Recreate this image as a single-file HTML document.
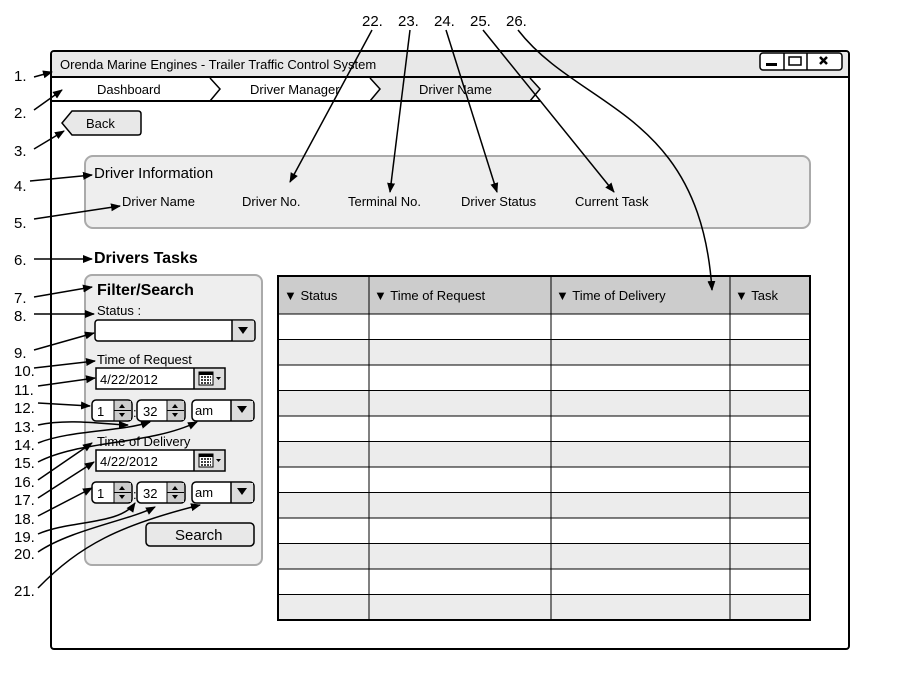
<!DOCTYPE html>
<html><head><meta charset="utf-8"><style>
html,body{margin:0;padding:0;background:#fff;width:900px;height:700px;overflow:hidden}
svg{display:block;font-family:"Liberation Sans",Arial,sans-serif}
</style></head><body>
<svg width="900" height="700" viewBox="0 0 900 700">
<defs>
<marker id="a" markerWidth="10" markerHeight="10" refX="9" refY="5" orient="auto" markerUnits="userSpaceOnUse">
<path d="M0,1 L10,5 L0,9 Z" fill="#000"/></marker>
</defs>
<!-- window -->
<rect x="51" y="51" width="798" height="598" rx="3" fill="#fff" stroke="#000" stroke-width="2"/>
<path d="M52,77 V54 Q52,52 54,52 H846 Q848,52 848,54 V77 Z" fill="#e8e8e8"/>
<line x1="51" y1="77" x2="849" y2="77" stroke="#000" stroke-width="2"/>
<text x="60" y="69" font-size="13">Orenda Marine Engines - Trailer Traffic Control System</text>
<rect x="760" y="53" width="82" height="17" rx="3" fill="#fff" stroke="#000" stroke-width="1.5"/>
<line x1="784" y1="53" x2="784" y2="70" stroke="#000" stroke-width="1.5"/>
<line x1="807" y1="53" x2="807" y2="70" stroke="#000" stroke-width="1.5"/>
<rect x="766" y="63" width="11" height="3" fill="#000"/>
<rect x="789" y="57" width="12" height="8" fill="none" stroke="#000" stroke-width="1.5"/>
<path d="M820,57 L827,64 M827,57 L820,64" stroke="#000" stroke-width="2.5"/>
<!-- breadcrumb -->
<path d="M370,78 H530 L540,89 L530,101 H370 L380,89 Z" fill="#e8e8e8"/>
<path d="M210,78 L220,89 L210,101 M370,78 L380,89 L370,101 M530,78 L540,89 L530,101" fill="none" stroke="#000" stroke-width="1.5"/>
<line x1="51" y1="101" x2="540" y2="101" stroke="#000" stroke-width="2"/>
<text x="97" y="94" font-size="13">Dashboard</text>
<text x="250" y="94" font-size="13">Driver Manager</text>
<text x="419" y="94" font-size="13">Driver Name</text>
<!-- back -->
<path d="M72,111 H138 Q141,111 141,114 V132 Q141,135 138,135 H72 L62,123 Z" fill="#e8e8e8" stroke="#000" stroke-width="1.5"/>
<text x="86" y="128" font-size="13">Back</text>
<!-- driver info -->
<rect x="85" y="156" width="725" height="72" rx="8" fill="#eee" stroke="#aaa" stroke-width="2"/>
<text x="94" y="178" font-size="15">Driver Information</text>
<g font-size="13"><text x="122" y="206">Driver Name</text><text x="242" y="206">Driver No.</text><text x="348" y="206">Terminal No.</text><text x="461" y="206">Driver Status</text><text x="575" y="206">Current Task</text></g>
<text x="94" y="263" font-size="16" font-weight="bold">Drivers Tasks</text>
<!-- filter -->
<rect x="85" y="275" width="177" height="290" rx="7" fill="#eee" stroke="#aaa" stroke-width="2"/>
<text x="97" y="295" font-size="16" font-weight="bold">Filter/Search</text>
<text x="97" y="315" font-size="13">Status :</text>
<rect x="95" y="320" width="160" height="21" rx="3" fill="#fff" stroke="#000" stroke-width="1.5"/>
<rect x="232" y="320.75" width="22" height="19.5" fill="#ddd"/><line x1="232" y1="320" x2="232" y2="341" stroke="#000" stroke-width="1.5"/>
<path d="M238,327 H248 L243,334 Z" fill="#000"/>
<text x="97" y="364" font-size="13">Time of Request</text>
<g id="dt">
<rect x="96" y="368" width="129" height="21" fill="#fff" stroke="#000" stroke-width="1.5"/>
<rect x="194" y="369" width="30" height="19" fill="#ddd"/><line x1="194" y1="368" x2="194" y2="389" stroke="#000" stroke-width="1.5"/>
<rect x="199" y="372" width="14" height="13" fill="#fff" stroke="#000"/><rect x="199" y="372" width="14" height="3" fill="#000"/>
<path d="M201,377h10M201,380h10M201,383h10" stroke="#000" stroke-width="1.5" stroke-dasharray="2,1"/>
<path d="M216,377 h5 l-2.5,3 z" fill="#000"/>
<text x="100" y="384" font-size="13">4/22/2012</text>
</g>
<g id="tm">
<rect x="92" y="400" width="40" height="21" rx="4" fill="#fff" stroke="#000" stroke-width="1.5"/>
<rect x="114" y="401" width="17" height="19" fill="#ccc"/><line x1="114" y1="400" x2="114" y2="421" stroke="#000"/><line x1="114" y1="410.5" x2="131" y2="410.5" stroke="#000"/>
<path d="M119,408 h6 l-3,-4 z M119,413 h6 l-3,4 z" fill="#000"/>
<text x="97" y="416" font-size="13">1</text>
<text x="133" y="417" font-size="13">:</text>
<rect x="137" y="400" width="48" height="21" rx="4" fill="#fff" stroke="#000" stroke-width="1.5"/>
<rect x="167" y="401" width="17" height="19" fill="#ccc"/><line x1="167" y1="400" x2="167" y2="421" stroke="#000"/><line x1="167" y1="410.5" x2="184" y2="410.5" stroke="#000"/>
<path d="M172,408 h6 l-3,-4 z M172,413 h6 l-3,4 z" fill="#000"/>
<text x="143" y="416" font-size="13">32</text>
<rect x="192" y="400" width="62" height="21" rx="4" fill="#fff" stroke="#000" stroke-width="1.5"/>
<rect x="231" y="401" width="22" height="19" fill="#ddd"/><line x1="231" y1="400" x2="231" y2="421" stroke="#000" stroke-width="1.5"/>
<path d="M237,406 H247 L242,413 Z" fill="#000"/>
<text x="195" y="415" font-size="13">am</text>
</g>
<text x="97" y="446" font-size="13">Time of Delivery</text>
<use href="#dt" y="82"/>
<use href="#tm" y="82"/>
<rect x="146" y="523" width="108" height="23" rx="4" fill="#e8e8e8" stroke="#000" stroke-width="1.5"/>
<text x="175" y="540" font-size="15">Search</text>
<!-- table -->
<rect x="278" y="276" width="532" height="38" fill="#ccc"/>
<g fill="#ececec">
<rect x="278" y="339.5" width="532" height="25.5"/><rect x="278" y="390.5" width="532" height="25.5"/><rect x="278" y="441.5" width="532" height="25.5"/><rect x="278" y="492.5" width="532" height="25.5"/><rect x="278" y="543.5" width="532" height="25.5"/><rect x="278" y="594.5" width="532" height="25.5"/>
</g>
<g stroke="#000" stroke-width="1">
<line x1="278" y1="314" x2="810" y2="314"/><line x1="278" y1="339.5" x2="810" y2="339.5"/><line x1="278" y1="365" x2="810" y2="365"/><line x1="278" y1="390.5" x2="810" y2="390.5"/><line x1="278" y1="416" x2="810" y2="416"/><line x1="278" y1="441.5" x2="810" y2="441.5"/><line x1="278" y1="467" x2="810" y2="467"/><line x1="278" y1="492.5" x2="810" y2="492.5"/><line x1="278" y1="518" x2="810" y2="518"/><line x1="278" y1="543.5" x2="810" y2="543.5"/><line x1="278" y1="569" x2="810" y2="569"/><line x1="278" y1="594.5" x2="810" y2="594.5"/>
<line x1="369" y1="276" x2="369" y2="620"/><line x1="551" y1="276" x2="551" y2="620"/><line x1="730" y1="276" x2="730" y2="620"/>
</g>
<rect x="278" y="276" width="532" height="344" fill="none" stroke="#000" stroke-width="2"/>
<g font-size="13"><text x="284" y="300">▼ Status</text><text x="374" y="300">▼ Time of Request</text><text x="556" y="300">▼ Time of Delivery</text><text x="735" y="300">▼ Task</text></g>
<!-- annotations -->
<g font-size="15">
<text x="14" y="81">1.</text><text x="14" y="118">2.</text><text x="14" y="156">3.</text><text x="14" y="191">4.</text><text x="14" y="228">5.</text><text x="14" y="265">6.</text><text x="14" y="303">7.</text><text x="14" y="321">8.</text><text x="14" y="358">9.</text><text x="14" y="376">10.</text><text x="14" y="395">11.</text><text x="14" y="413">12.</text><text x="14" y="432">13.</text><text x="14" y="450">14.</text><text x="14" y="468">15.</text><text x="14" y="487">16.</text><text x="14" y="505">17.</text><text x="14" y="524">18.</text><text x="14" y="542">19.</text><text x="14" y="559">20.</text><text x="14" y="596">21.</text>
<text x="362" y="26">22.</text><text x="398" y="26">23.</text><text x="434" y="26">24.</text><text x="470" y="26">25.</text><text x="506" y="26">26.</text>
</g>
<g fill="none" stroke="#000" stroke-width="1.5" marker-end="url(#a)">
<path d="M34,77 L52,72"/><path d="M34,110 L62,90"/><path d="M34,149 L64,131"/><path d="M30,181 L92,175"/><path d="M34,219 L120,206"/><path d="M34,259 L92,259"/><path d="M34,297 L92,287"/><path d="M34,314 L94,314"/><path d="M34,350 L94,333"/><path d="M34,368 L95,361"/><path d="M38,386 L95,378"/><path d="M38,403 L90,406"/><path d="M38,425 C70,418 110,425 128,425"/><path d="M38,443 C70,430 120,432 150,422"/><path d="M38,462 C80,440 150,445 197,422"/><path d="M38,480 L92,443"/><path d="M38,498 L94,462"/><path d="M38,516 L92,488"/><path d="M38,534 C70,520 120,525 135,503"/><path d="M38,552 C70,530 130,520 155,507"/><path d="M38,588 C80,545 120,525 200,505"/>
<path d="M372,30 L290,182"/><path d="M410,30 L390,192"/><path d="M446,30 L497,192"/><path d="M483,30 L614,192"/><path d="M518,30 C580,110 700,110 712,290"/>
</g>
</svg>
</body></html>
